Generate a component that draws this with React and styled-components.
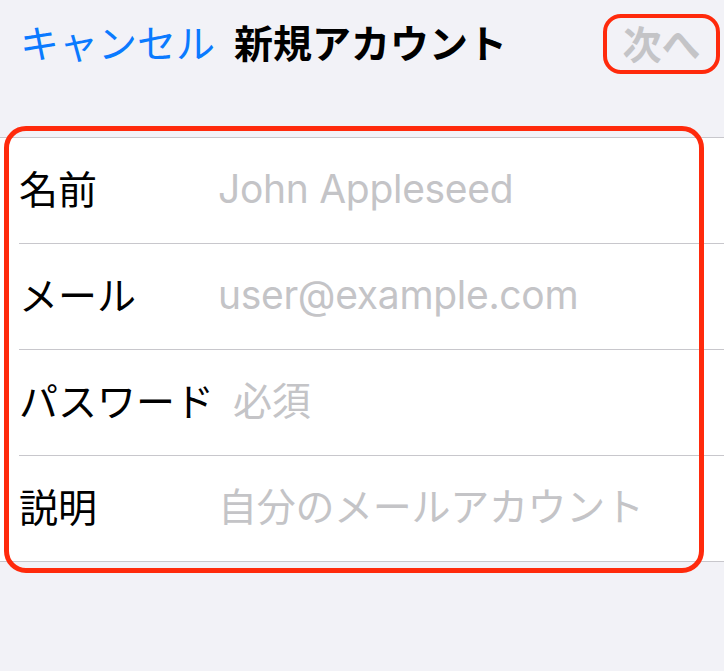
import styled, { createGlobalStyle } from 'styled-components';

const GlobalStyle = createGlobalStyle`
  html, body {
    margin: 0;
    padding: 0;
    background: #f2f2f7;
  }
  body {
    font-family: "Inter", "Noto Sans CJK JP", sans-serif;
    -webkit-font-smoothing: antialiased;
  }
`;

const Screen = styled.div`
  width: 724px;
  min-height: 100vh;
  background: #f2f2f7;
  overflow: hidden;
`;

const NavBar = styled.header`
  height: 88px;
  display: flex;
  align-items: center;
  justify-content: space-between;
  padding: 0 4px 0 20px;
  box-sizing: border-box;
`;

const NavLeft = styled.div`
  display: flex;
  align-items: center;
  gap: 19px;
  padding-bottom: 6px;
`;

const CancelButton = styled.button`
  background: none;
  border: none;
  padding: 0;
  font-family: "Noto Sans CJK JP", sans-serif;
  font-size: 39px;
  line-height: 1;
  color: #0a7aff;
  cursor: pointer;
`;

const Title = styled.h1`
  margin: 0;
  font-family: "Noto Sans CJK JP", sans-serif;
  font-size: 39px;
  line-height: 1;
  font-weight: 700;
  color: #000;
`;

const NextButton = styled.button`
  width: 117px;
  height: 60px;
  box-sizing: border-box;
  display: flex;
  align-items: center;
  justify-content: center;
  background: none;
  border: 4px solid #ff2a0c;
  border-radius: 18px;
  padding: 0 0 3px;
  font-family: "Noto Sans CJK JP", sans-serif;
  font-size: 39px;
  line-height: 1;
  font-weight: 700;
  color: #c4c4c7;
`;

const Section = styled.section`
  position: relative;
  margin-top: 49px;
  background: #fff;
  border-top: 1px solid #c8c7cc;
  border-bottom: 1px solid #c8c7cc;
`;

const Highlight = styled.div`
  position: absolute;
  top: -12px;
  bottom: -12px;
  left: 4px;
  right: 20px;
  border: 5px solid #ff2a0c;
  border-radius: 22px;
  pointer-events: none;
`;

const Row = styled.div`
  margin-left: 19px;
  height: 105px;
  display: flex;
  align-items: center;
  border-bottom: ${(p) => (p.$last ? 'none' : '1px solid #c8c7cc')};
`;

const Label = styled.span`
  flex: none;
  min-width: 180px;
  margin-right: 19px;
  padding-bottom: 7px;
  font-family: "Noto Sans CJK JP", sans-serif;
  font-size: 39px;
  line-height: 1;
  color: #000;
  white-space: nowrap;
`;

const Field = styled.input`
  flex: 1;
  min-width: 0;
  border: none;
  outline: none;
  background: transparent;
  padding: 0 0 3px;
  font-family: "Inter", "Noto Sans CJK JP", sans-serif;
  font-size: 39px;
  letter-spacing: -0.3px;
  line-height: 1.2;
  color: #000;

  &::placeholder {
    color: #c4c4c7;
  }
`;

const fields = [
  { label: '名前', placeholder: 'John Appleseed', type: 'text' },
  { label: 'メール', placeholder: 'user@example.com', type: 'email' },
  { label: 'パスワード', placeholder: '必須', type: 'password' },
  { label: '説明', placeholder: '自分のメールアカウント', type: 'text' },
];

export default function App() {
  return (
    <Screen>
      <GlobalStyle />
      <NavBar>
        <NavLeft>
          <CancelButton>キャンセル</CancelButton>
          <Title>新規アカウント</Title>
        </NavLeft>
        <NextButton disabled>次へ</NextButton>
      </NavBar>
      <Section>
        {fields.map((f, i) => (
          <Row key={f.label} $last={i === fields.length - 1}>
            <Label>{f.label}</Label>
            <Field type={f.type} placeholder={f.placeholder} />
          </Row>
        ))}
        <Highlight />
      </Section>
    </Screen>
  );
}
